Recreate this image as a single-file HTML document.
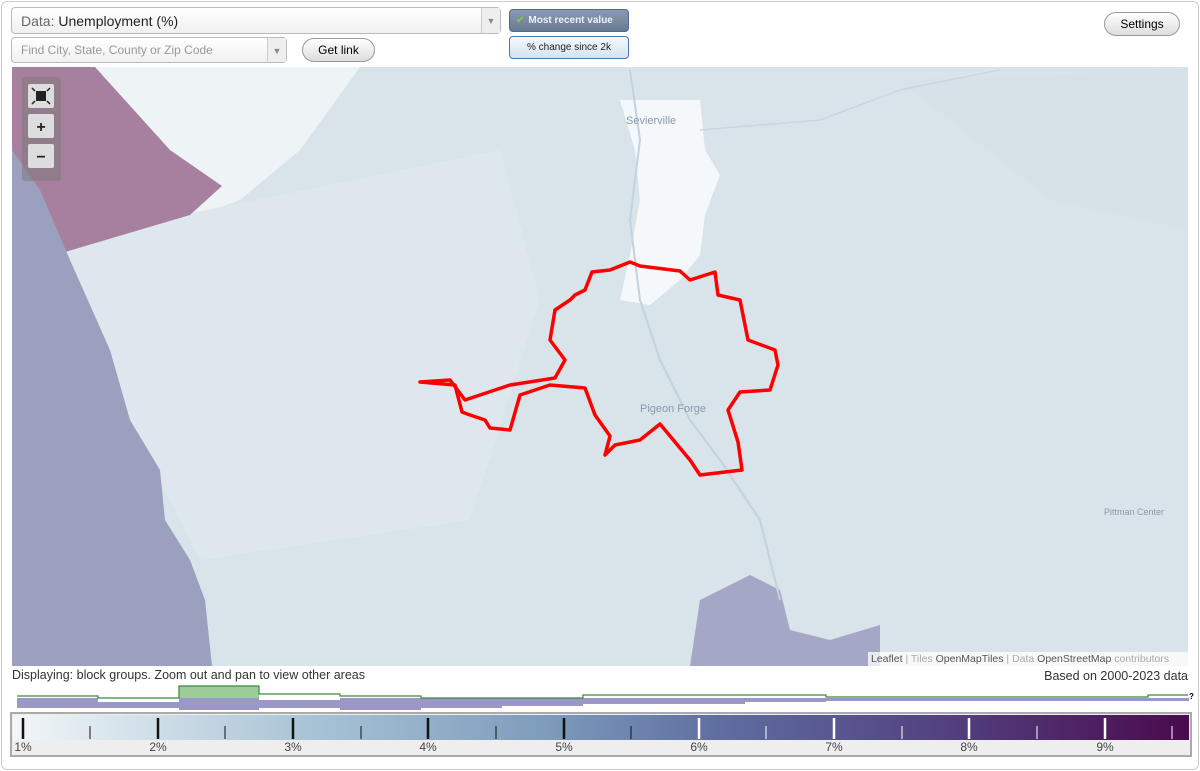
<!DOCTYPE html>
<html><head><meta charset="utf-8"><style>
body{margin:0;width:1200px;height:771px;overflow:hidden;background:#fff;font-family:"Liberation Sans",sans-serif;}
.frame{position:absolute;left:1px;top:1px;width:1196px;height:767px;border:1px solid #ccc;border-radius:6px;}
.sel{position:absolute;border:1px solid #bbb;border-radius:4px;background:linear-gradient(#fff,#f0f0f0);box-sizing:border-box;}
.arr{position:absolute;right:0;top:0;bottom:0;width:18px;border-left:1px solid #ccc;background:#eee;color:#888;font-size:9px;text-align:center;}
.btn{position:absolute;border:1px solid #999;border-radius:12px;background:linear-gradient(#fff,#ddd);font-size:12px;text-align:center;box-sizing:border-box;}
.t{position:absolute;font-size:12.5px;color:#333;}
</style></head><body>
<div class="frame"></div>
<div class="sel" style="left:11px;top:7px;width:490px;height:27px;"><span style="position:absolute;left:9px;top:5px;font-size:14px;color:#666">Data: <span style="color:#222">Unemployment (%)</span></span><div class="arr" style="line-height:27px">▼</div></div>
<div class="sel" style="left:11px;top:37px;width:276px;height:26px;"><span style="position:absolute;left:9px;top:5px;font-size:12px;color:#999">Find City, State, County or Zip Code</span><div class="arr" style="line-height:26px">▼</div></div>
<div class="btn" style="left:302px;top:38px;width:73px;height:24px;line-height:22px">Get link</div>
<div style="position:absolute;left:509px;top:9px;width:120px;height:23px;border:1px solid #4a6a9a;border-radius:4px;background:linear-gradient(#8a9ab0,#6a7a90);box-sizing:border-box;color:#eef;font-size:10px;font-weight:bold;line-height:21px;"><span style="color:#7c4;margin:0 4px 0 6px">✔</span>Most recent value</div>
<div style="position:absolute;left:509px;top:36px;width:120px;height:23px;border:1px solid #4a7ab0;border-radius:4px;background:linear-gradient(#f4f8fc,#d6e2ee);box-sizing:border-box;font-size:10px;text-align:center;line-height:21px;color:#222">% change since 2k</div>
<div class="btn" style="left:1104px;top:12px;width:76px;height:24px;line-height:22px">Settings</div>

<svg style="position:absolute;left:12px;top:67px" width="1176" height="599" viewBox="12 67 1176 599">
<rect x="12" y="67" width="1176" height="599" fill="#d9e3ea"/>
<polygon points="60,67 360,67 300,150 240,200 80,260 30,300" fill="#eef3f6"/>
<polygon points="60,240 500,150 540,300 470,520 200,560 130,420" fill="#dee7ed"/>
<polygon points="12,67 95,67 170,150 222,186 190,215 65,252 12,262" fill="#a8809f"/>
<polygon points="12,150 40,190 70,260 110,350 130,420 160,470 165,520 190,560 205,600 212,666 12,666" fill="#9ca0bf"/>
<polygon points="700,600 750,575 780,590 790,630 830,640 880,625 880,666 690,666" fill="#a4a8c6"/>
<polygon points="620,100 700,100 705,150 720,175 705,215 700,255 680,280 650,305 620,300 630,255 640,200 635,150" fill="#f5f8fa"/>
<polygon points="900,80 1188,70 1188,230 1050,200" fill="#d4e0e6" opacity=".6"/>
<polyline fill="none" stroke="#c2d2de" stroke-width="2" points="630,70 640,140 630,220 640,300 660,360 690,420 720,460 760,520 780,600"/>
<polyline fill="none" stroke="#c8d6e0" stroke-width="1.5" points="700,130 820,120 900,90 1000,70"/>
<text x="626" y="124" font-size="11" fill="#8a9aa8" font-family="Liberation Sans">Sevierville</text>
<text x="640" y="412" font-size="11" fill="#8a9aa8" font-family="Liberation Sans">Pigeon Forge</text>
<text x="1104" y="515" font-size="9" fill="#8a9aa8" font-family="Liberation Sans">Pittman Center</text>
<polygon fill="none" stroke="#f00" stroke-width="3.5" stroke-linejoin="round" points="630,262 640,266 680,271 690,280 715,272 718,295 740,300 748,340 775,350 778,365 770,390 740,392 728,410 738,442 742,470 700,475 690,460 660,424 640,440 615,445 605,455 610,436 595,415 585,388 550,385 520,395 510,430 490,428 485,420 470,415 462,412 455,385 420,382 450,380 465,400 480,395 510,385 555,378 565,360 550,340 555,310 570,300 575,295 585,290 592,272 610,270"/>
<rect x="868" y="652" width="320" height="14" fill="#fff" opacity=".75"/>
<text x="871" y="662" font-size="10.5" fill="#555" font-family="Liberation Sans">Leaflet <tspan fill="#aaa">| Tiles</tspan> OpenMapTiles <tspan fill="#aaa">| Data</tspan> OpenStreetMap <tspan fill="#aaa">contributors</tspan></text>
<rect x="22" y="77" width="39" height="104" rx="3" fill="#777" opacity=".5"/>
<rect x="28" y="84" width="26" height="24" rx="2" fill="#ddd"/><rect x="36" y="91" width="10" height="10" fill="#222"/>
<path d="M32,88l3,3M50,88l-3,3M32,104l3,-3M50,104l-3,-3" stroke="#222" stroke-width="1.5"/>
<rect x="28" y="114" width="26" height="24" rx="2" fill="#ddd"/><text x="41" y="132" font-size="16" font-weight="bold" text-anchor="middle" fill="#222">+</text>
<rect x="28" y="144" width="26" height="24" rx="2" fill="#ddd"/><text x="41" y="162" font-size="16" font-weight="bold" text-anchor="middle" fill="#222">−</text>
</svg>

<div class="t" style="left:12px;top:668px">Displaying: block groups. Zoom out and pan to view other areas</div>
<div class="t" style="right:12px;top:669px">Based on 2000-2023 data</div>

<svg style="position:absolute;left:0;top:680px" width="1200" height="91">
<g fill="#9b98c8">
<rect x="17" y="18" width="81" height="10"/><rect x="98" y="22" width="81" height="6"/><rect x="179" y="18" width="80" height="12"/><rect x="259" y="20" width="81" height="8"/><rect x="340" y="18" width="81" height="12"/><rect x="421" y="18" width="81" height="10"/><rect x="502" y="18" width="81" height="8"/><rect x="583" y="18" width="81" height="6"/><rect x="664" y="18" width="81" height="6"/><rect x="745" y="18" width="81" height="4"/><rect x="826" y="18" width="81" height="3"/><rect x="907" y="18" width="282" height="3"/>
</g>
<rect x="179" y="6" width="80" height="12" fill="#9ccc98"/>
<polyline fill="none" stroke="#3a8a3a" stroke-width="1.2" points="17,16 98,16 98,18 179,18 179,6 259,6 259,14 340,14 340,16 421,16 421,18 583,18 583,15 826,15 826,17 1148,17 1148,15 1188,15"/>
<text x="1189" y="19" font-size="8" font-weight="bold">?</text>
<defs><linearGradient id="g" x1="0" x2="1"><stop offset="0" stop-color="#f2f6f8"/><stop offset=".25" stop-color="#a9c4d6"/><stop offset=".45" stop-color="#7e9cbc"/><stop offset=".6" stop-color="#5f6ea0"/><stop offset=".8" stop-color="#523f7e"/><stop offset="1" stop-color="#4a0a4c"/></linearGradient></defs>
<rect x="11" y="33" width="1180" height="43" fill="#eee" stroke="#aaa" stroke-width="2"/>
<rect x="13" y="35" width="1176" height="25" fill="url(#g)"/>
<g stroke="#111" stroke-width="2.5"><path d="M23,38v21M158,38v21M293,38v21M428,38v21M564,38v21"/></g>
<g stroke="#111" stroke-width="1"><path d="M90,46v13M225,46v13M361,46v13M496,46v13M631,46v13"/></g>
<g stroke="#fff" stroke-width="2.5"><path d="M699,38v21M834,38v21M969,38v21M1105,38v21"/></g>
<g stroke="#fff" stroke-width="1"><path d="M766,46v13M902,46v13M1037,46v13M1172,46v13"/></g>
<g font-size="12" fill="#444" text-anchor="middle"><text x="23" y="71">1%</text><text x="158" y="71">2%</text><text x="293" y="71">3%</text><text x="428" y="71">4%</text><text x="564" y="71">5%</text><text x="699" y="71">6%</text><text x="834" y="71">7%</text><text x="969" y="71">8%</text><text x="1105" y="71">9%</text></g>
</svg>
</body></html>
